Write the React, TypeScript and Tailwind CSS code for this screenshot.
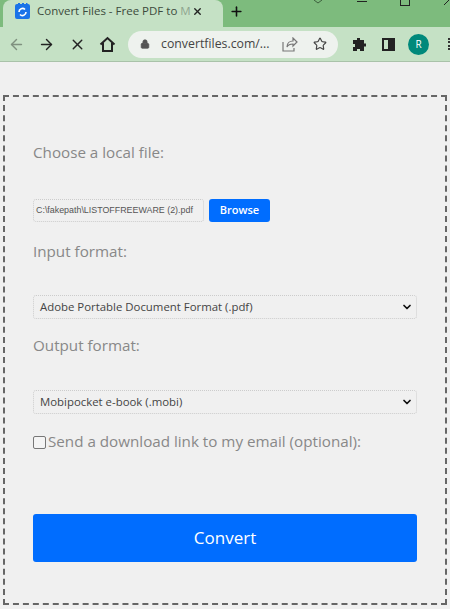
import { ArrowLeft, ArrowRight, ChevronDown, Lock, Plus, Star, X } from 'lucide-react';

const font = { fontFamily: '"Open Sans", sans-serif' };

function ChromeBar() {
  return (
    <div className="font-['Open_Sans',sans-serif]">
      <div className="relative h-[27px] bg-[#7dbb7d] flex items-stretch overflow-hidden">
        <div className="ml-[3px] w-[220px] h-[27px] bg-[#c5e1c5] rounded-t-lg flex items-center pl-[12px] pb-[5px] shrink-0">
          <svg width="15" height="16" viewBox="0 0 15 16" className="shrink-0">
            <rect x="0" y="1" width="15" height="15" rx="2" fill="#1a73e8" />
            <path d="M3 0h2v3H3zM7 0h2v3H7zM11 0h1.500v3H11z" fill="#1a73e8" />
            <path d="M4 9a3.500 3.500 0 0 1 6-2.500M11 9a3.500 3.500 0 0 1-6 2.500" stroke="#fff" strokeWidth="1.600" fill="none" />
          </svg>
          <span className="ml-[7px] w-[151px] text-[11.500px] text-[#3c4a3c] whitespace-nowrap">
            Convert Files - Free PDF to <span className="opacity-40">M</span>
          </span>
          <X className="w-[11px] h-[11px] ml-[4px] text-[#222]" strokeWidth={3} />
        </div>
        <Plus className="w-[15px] h-[15px] ml-[6px] mt-[4px] text-[#111]" strokeWidth={2.500} />
        {/* window controls, clipped by the top of the capture */}
        <svg width="10" height="4" viewBox="0 0 10 4" fill="none" stroke="#3d5f3d" className="absolute left-[313px] top-0">
          <path d="M1 0l4 3 4-3" />
        </svg>
        <div className="absolute left-[357px] top-[1px] w-[10px] h-px bg-[#222]" />
        <div className="absolute left-[400px] -top-[4px] w-[10px] h-[10px] border border-[#222]" />
        <svg width="6" height="6" viewBox="0 0 6 6" stroke="#222" className="absolute left-[444px] top-0">
          <path d="M0 5L5 0" />
        </svg>
      </div>
      <div className="relative h-[35px] bg-[#c5e1c5] border-b border-[#a9c2a9] flex items-center pl-[8px]">
        <ArrowLeft className="w-[17px] h-[17px] text-[#7f917f]" strokeWidth={2} />
        <ArrowRight className="w-[17px] h-[17px] ml-[13px] text-[#222]" strokeWidth={2} />
        <X className="w-[17px] h-[17px] ml-[14px] text-[#222]" strokeWidth={2} />
        <svg width="17" height="17" viewBox="0 0 17 17" fill="none" stroke="#222" strokeWidth="2" className="ml-[13px]">
          <path d="M1.500 8.500L8.500 2l7 6.500M4 7v8h9V7" />
        </svg>
        <div className="ml-[12px] w-[210px] h-[27px] rounded-full bg-[#eef2ee] flex items-center pl-[12px]">
          <Lock className="w-[10px] h-[10px] text-[#555]" fill="#555" strokeWidth={2} />
          <span className="ml-[11px] w-[110px] text-[12.300px] text-[#444] whitespace-nowrap">convertfiles.com/...</span>
          <svg width="16" height="15" viewBox="0 0 16 15" fill="none" stroke="#777" strokeWidth="1.200" className="ml-[11px]">
            <path d="M1 5v9h11v-3M5 10c0-4 3-6 6-6V1l4 4-4 4V7c-3 0-5 1-6 3z" />
          </svg>
          <Star className="w-[14px] h-[14px] ml-[15px] text-[#444]" strokeWidth={2} />
        </div>
        <svg width="15" height="15" viewBox="0 0 15 15" className="ml-[14px]" fill="#222">
          <path d="M5 1h3v2h4v3.500h2v3h-2V14H8v-2H5v2H1v-4h2V7H1V3h4z" />
        </svg>
        <div className="ml-[15px] w-[13px] h-[13px] border-2 border-[#222] flex justify-end">
          <div className="w-[5px] h-full bg-[#222]" />
        </div>
        <div className="ml-[13px] w-[21px] h-[21px] rounded-full bg-[#00897b] text-white text-[10px] flex items-center justify-center">R</div>
        <div className="ml-[19px] w-[2px] h-[12px] border-l-2 border-dotted border-[#333]" />
      </div>
    </div>
  );
}

function Label({ children }: { children: string }) {
  return <div className="text-[15.200px] leading-[22px] text-[#888]">{children}</div>;
}

function FakeSelect({ value }: { value: string }) {
  return (
    <div className="h-[24px] border border-dotted border-[#ccc] rounded-[3px] flex items-center justify-between pl-[6px] pr-[3px]">
      <span className="text-[11.400px] text-[#444]">{value}</span>
      <ChevronDown className="w-[12px] h-[12px] text-[#111]" strokeWidth={3.500} />
    </div>
  );
}

export default function App() {
  return (
    <div className="w-[450px] h-[609px] bg-[#f0f0f0] overflow-hidden" style={font}>
      <ChromeBar />
      <div className="mx-[3px] mt-[33px] h-[510px] border-2 border-dashed border-[#666] pl-[28px] pr-[28px] pt-[44px]">
        <Label>Choose a local file:</Label>
        <div className="mt-[36px] flex items-center gap-[5px]">
          <div className="w-[171px] h-[23px] border border-dotted border-[#ccc] rounded-[3px] flex items-center pl-[2px] text-[8.900px] text-[#555] font-['Liberation_Sans',sans-serif] whitespace-nowrap">
            C:\fakepath\LISTOFFREEWARE (2).pdf
          </div>
          <button className="w-[61px] h-[23px] bg-[#006dff] rounded-[3px] text-white text-[11px] font-semibold">Browse</button>
        </div>
        <div className="mt-[18px]"><Label>Input format:</Label></div>
        <div className="mt-[33px]"><FakeSelect value="Adobe Portable Document Format (.pdf)" /></div>
        <div className="mt-[15px]"><Label>Output format:</Label></div>
        <div className="mt-[34px]"><FakeSelect value="Mobipocket e-book (.mobi)" /></div>
        <div className="mt-[16px] flex items-center">
          <div className="w-[13px] h-[13px] mt-[2px] border border-[#777] rounded-[2px] bg-[#f4f4f4] shrink-0" />
          <span className="ml-[2px] text-[15.200px] leading-[22px] text-[#888] whitespace-nowrap">Send a download link to my email (optional):</span>
        </div>
        <button className="mt-[62px] w-full h-[48px] bg-[#006dff] rounded-[3px] text-white text-[17px]">Convert</button>
      </div>
    </div>
  );
}
